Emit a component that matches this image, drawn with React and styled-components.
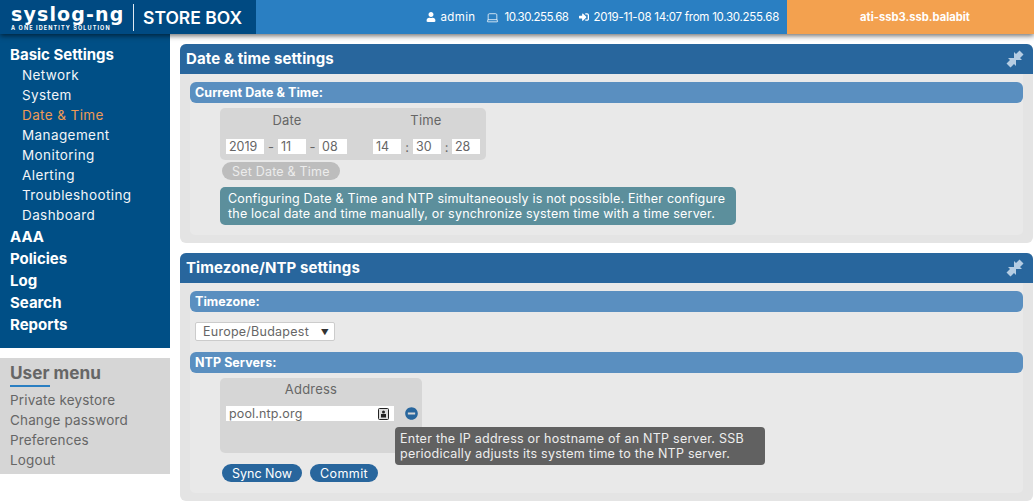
import React from 'react'
import styled, { createGlobalStyle } from 'styled-components'
import { FaUser, FaSignInAlt, FaMinusCircle } from 'react-icons/fa'
import { Laptop } from 'lucide-react'

const Global = createGlobalStyle`
    html, body { margin: 0; padding: 0; background: #fff; }
    body { font-family: Inter, "Open Sans", sans-serif; font-size: 13px; color: #666; overflow: hidden; }
    * { box-sizing: border-box; }
`

const Page = styled.div`
    width: 1034px;
    height: 501px;
    overflow: hidden;
    display: flex;
    flex-direction: column;
`

const Header = styled.header`
    height: 34px;
    flex: none;
    display: flex;
    background: #2a7fc2;
    color: #fff;
    box-shadow: 0 2px 5px rgba(0, 0, 0, 0.55);
    position: relative;
    z-index: 2;
`

const Brand = styled.div`
    width: 256px;
    background: #004a82;
    display: flex;
    align-items: center;
    padding-left: 11px;
`

const LogoText = styled.div`
    width: 115px;
    display: flex;
    flex-direction: column;
    align-items: flex-start;
    padding-top: 2px;
`

const LogoName = styled.div`
    font-family: "DejaVu Sans", sans-serif;
    font-size: 19px;
    font-weight: 700;
    line-height: 20px;
    letter-spacing: 1.15px;
    white-space: nowrap;
`

const LogoTag = styled.div`
    font-size: 5.5px;
    font-weight: 700;
    line-height: 8px;
    letter-spacing: 1.1px;
    white-space: nowrap;
`

const Divider = styled.div`
    width: 1px;
    height: 27px;
    background: #dfe9f2;
    margin: 0 9px 0 7px;
`

const Product = styled.div`
    font-size: 17.5px;
    font-weight: 600;
    white-space: nowrap;
`

const Status = styled.div`
    flex: 1;
    display: flex;
    justify-content: flex-end;
    align-items: center;
    gap: 11px;
    padding-right: 8px;
    font-size: 11.5px;
`

const StatusItem = styled.span`
    display: inline-flex;
    align-items: center;
    gap: ${p => p.$gap}px;
    white-space: nowrap;
    letter-spacing: ${p => p.$spacing}px;
    svg { font-size: 10px; flex: none; }
`

const Host = styled.div`
    width: 247px;
    background: #f3a14f;
    display: flex;
    align-items: center;
    justify-content: center;
    font-size: 11.2px;
    font-weight: 700;
    padding-left: 9px;
`

const Content = styled.div`
    flex: 1;
    display: flex;
    min-height: 0;
`

const Sidebar = styled.aside`
    width: 170px;
    flex: none;
    display: flex;
    flex-direction: column;
    gap: 10px;
`

const NavBox = styled.nav`
    height: 314px;
    background: #004f86;
    padding: 10px 0 0 10px;
    color: #fff;
`

const NavGroup = styled.div`
    font-size: 15px;
    font-weight: 700;
    line-height: 22px;
`

const NavList = styled.div`
    margin: -1px 0 1px;
`

const NavItem = styled.div`
    font-size: 13.5px;
    line-height: 20px;
    letter-spacing: 0.4px;
    padding-left: 12px;
    color: ${p => (p.$active ? '#ef9a55' : '#f2f5f8')};
`

const UserBox = styled.div`
    height: 116px;
    background: #d6d6d6;
    padding: 4px 10px 0;
`

const UserTitle = styled.div`
    display: inline-block;
    font-size: 17.2px;
    font-weight: 700;
    color: #666;
    line-height: 22px;
    position: relative;
    margin-bottom: 6px;
    &::after {
        content: '';
        position: absolute;
        left: 0;
        bottom: -3px;
        width: 40px;
        height: 2px;
        background: #2a7fc2;
    }
`

const UserLink = styled.div`
    font-size: 13.5px;
    line-height: 20px;
    letter-spacing: 0.15px;
    color: #666;
`

const Main = styled.main`
    flex: 1;
    min-width: 0;
    padding: 10px 1px 0 10px;
    display: flex;
    flex-direction: column;
    gap: 10px;
`

const Panel = styled.section`
    background: #e4e4e4;
    border-radius: 6px;
    height: ${p => p.$height}px;
    flex: none;
    padding-bottom: 8px;
    display: flex;
    flex-direction: column;
`

const PanelHead = styled.div`
    height: 30px;
    flex: none;
    background: #28669d;
    border-radius: 6px 6px 0 0;
    color: #fff;
    font-size: 15px;
    font-weight: 700;
    letter-spacing: 0.1px;
    display: flex;
    align-items: center;
    justify-content: space-between;
    padding: 0 8px 2px 6px;
`

const PinIcon = styled.svg`
    width: 20px;
    height: 20px;
    margin-top: 2px;
    flex: none;
`

const PanelBody = styled.div`
    flex: 1;
    margin: 0 10px;
    padding-top: 8px;
    background: #e9e9e9;
    border-radius: 0 0 5px 5px;
`

const SectionBar = styled.div`
    height: 21px;
    background: #5a8fc0;
    border-radius: 6px;
    color: #fff;
    font-size: 12.5px;
    font-weight: 700;
    letter-spacing: 0.05px;
    display: flex;
    align-items: center;
    padding-left: 5px;
`

const Card = styled.div`
    margin: 5px 0 0 30px;
    width: ${p => p.$width}px;
    height: ${p => p.$height}px;
    background: #d6d6d6;
    border-radius: 5px;
    padding: 0 6px;
    display: flex;
    flex-direction: column;
`

const LabelRow = styled.div`
    height: ${p => p.$height}px;
    flex: none;
    display: flex;
    align-items: center;
    font-size: 13px;
    letter-spacing: 0.2px;
    color: #666;
`

const Label = styled.span`
    width: ${p => p.$width}px;
    margin-left: ${p => p.$offset || 0}px;
    text-align: center;
`

const FieldRow = styled.div`
    margin-top: 7px;
    height: 15px;
    display: flex;
    align-items: center;
    color: #666;
    font-size: 13px;
`

const Field = styled.span`
    width: ${p => p.$width}px;
    height: 15px;
    background: #fff;
    padding-left: 3px;
    line-height: 15px;
    font-size: 12.5px;
    color: #666;
    flex: none;
`

const Sep = styled.span`
    width: ${p => p.$width}px;
    text-align: center;
    flex: none;
`

const Pill = styled.div`
    display: inline-flex;
    align-items: center;
    height: 18px;
    padding: 0 10px;
    border-radius: 9px;
    font-size: 12.5px;
    letter-spacing: ${p => p.$spacing || 0}px;
    background: ${p => (p.$disabled ? '#bdbdbd' : '#28669d')};
    color: ${p => (p.$disabled ? '#ececec' : '#fff')};
`

const Buttons = styled.div`
    display: flex;
    gap: 8px;
    margin: ${p => p.$top}px 0 0 32px;
`

const Notice = styled.div`
    margin: 7px 0 0 30px;
    width: 516px;
    height: 38px;
    padding: 4px 8px;
    background: #5c8f9c;
    border-radius: 5px;
    color: #fff;
    font-size: 12.5px;
    letter-spacing: 0.2px;
    line-height: 15px;
    white-space: nowrap;
`

const SelectBox = styled.div`
    margin: 10px 0 11px 5px;
    width: 140px;
    height: 19px;
    background: #fff;
    border: 1px solid #ccc;
    border-radius: 2px;
    display: flex;
    align-items: center;
    justify-content: space-between;
    padding: 0 5px 0 7px;
    font-size: 12.5px;
    letter-spacing: 0.25px;
    color: #666;
    &::after { content: '▼'; font-size: 8px; color: #333; }
`

const AddressRow = styled.div`
    position: relative;
    display: flex;
    align-items: center;
    margin-top: 6px;
`

const AddressField = styled.div`
    width: 168px;
    height: 15px;
    background: #fff;
    padding: 0 5px 0 3px;
    font-size: 12.5px;
    letter-spacing: 0.15px;
    line-height: 15px;
    color: #666;
    display: flex;
    align-items: center;
    justify-content: space-between;
`

const KeyIcon = styled.svg`
    width: 11px;
    height: 12px;
    flex: none;
`

const RemoveIcon = styled(FaMinusCircle)`
    position: absolute;
    left: 179px;
    font-size: 13px;
    color: #28669d;
`

const Tooltip = styled.div`
    position: absolute;
    left: 169px;
    top: 21px;
    width: 370px;
    height: 38px;
    padding: 4px 5px;
    background: #616161;
    border-radius: 4px;
    color: #eee;
    font-size: 12.5px;
    letter-spacing: 0.25px;
    line-height: 15px;
    white-space: nowrap;
    z-index: 1;
`

const navItems = ['Network', 'System', 'Date & Time', 'Management', 'Monitoring', 'Alerting', 'Troubleshooting', 'Dashboard']
const navGroups = ['AAA', 'Policies', 'Log', 'Search', 'Reports']
const userLinks = ['Private keystore', 'Change password', 'Preferences', 'Logout']

const Pin = () => (
    <PinIcon viewBox="0 0 20 20">
        <path fill="#b5cde3" d="M14.5 1.5 L18.5 5.5 L15 9 L17 11 L9 11 L9 3 L11 5 Z" />
        <path fill="#b5cde3" d="M5.5 18.5 L1.5 14.5 L5 11 L3 9 L11 9 L11 17 L9 15 Z" />
    </PinIcon>
)

const App = () => (
    <Page>
        <Global />
        <Header>
            <Brand>
                <LogoText>
                    <LogoName>syslog-ng</LogoName>
                    <LogoTag>A ONE IDENTITY SOLUTION</LogoTag>
                </LogoText>
                <Divider />
                <Product>STORE BOX</Product>
            </Brand>
            <Status>
                <StatusItem $gap={5} $spacing={0.35}><FaUser />admin</StatusItem>
                <StatusItem $gap={5} $spacing={-0.5}><Laptop size={13} strokeWidth={1.4} />10.30.255.68</StatusItem>
                <StatusItem $gap={4} $spacing={-0.26}><FaSignInAlt />2019-11-08 14:07 from 10.30.255.68</StatusItem>
            </Status>
            <Host>ati-ssb3.ssb.balabit</Host>
        </Header>
        <Content>
            <Sidebar>
                <NavBox>
                    <NavGroup>Basic Settings</NavGroup>
                    <NavList>
                        {navItems.map(item => (
                            <NavItem key={item} $active={item === 'Date & Time'}>{item}</NavItem>
                        ))}
                    </NavList>
                    {navGroups.map(group => <NavGroup key={group}>{group}</NavGroup>)}
                </NavBox>
                <UserBox>
                    <UserTitle>User menu</UserTitle>
                    {userLinks.map(link => <UserLink key={link}>{link}</UserLink>)}
                </UserBox>
            </Sidebar>
            <Main>
                <Panel $height={199}>
                    <PanelHead>Date &amp; time settings<Pin /></PanelHead>
                    <PanelBody>
                        <SectionBar>Current Date &amp; Time:</SectionBar>
                        <Card $width={266} $height={52}>
                            <LabelRow $height={24}>
                                <Label $width={122}>Date</Label>
                                <Label $width={106} $offset={25}>Time</Label>
                            </LabelRow>
                            <FieldRow>
                                <Field $width={38}>2019</Field>
                                <Sep $width={14}>-</Sep>
                                <Field $width={28}>11</Field>
                                <Sep $width={13}>-</Sep>
                                <Field $width={28}>08</Field>
                                <Sep $width={26} />
                                <Field $width={28}>14</Field>
                                <Sep $width={12}>:</Sep>
                                <Field $width={28}>30</Field>
                                <Sep $width={11}>:</Sep>
                                <Field $width={28}>28</Field>
                            </FieldRow>
                        </Card>
                        <Buttons $top={2}><Pill $disabled $spacing={0.2}>Set Date &amp; Time</Pill></Buttons>
                        <Notice>
                            Configuring Date &amp; Time and NTP simultaneously is not possible. Either configure<br />
                            the local date and time manually, or synchronize system time with a time server.
                        </Notice>
                    </PanelBody>
                </Panel>
                <Panel $height={248}>
                    <PanelHead>Timezone/NTP settings<Pin /></PanelHead>
                    <PanelBody>
                        <SectionBar>Timezone:</SectionBar>
                        <SelectBox>Europe/Budapest</SelectBox>
                        <SectionBar>NTP Servers:</SectionBar>
                        <Card $width={202} $height={75}>
                            <LabelRow $height={22}><Label $width={170}>Address</Label></LabelRow>
                            <AddressRow>
                                <AddressField>
                                    pool.ntp.org
                                    <KeyIcon viewBox="0 0 11 12">
                                        <rect x="0.5" y="0.5" width="10" height="11" rx="1" fill="#ddd" stroke="#222" />
                                        <circle cx="5.5" cy="4" r="1.5" fill="#222" />
                                        <rect x="3" y="6" width="5" height="3.5" fill="#222" />
                                    </KeyIcon>
                                </AddressField>
                                <RemoveIcon />
                                <Tooltip>
                                    Enter the IP address or hostname of an NTP server. SSB<br />
                                    periodically adjusts its system time to the NTP server.
                                </Tooltip>
                            </AddressRow>
                        </Card>
                        <Buttons $top={11}>
                            <Pill>Sync Now</Pill>
                            <Pill $spacing={0.4}>Commit</Pill>
                        </Buttons>
                    </PanelBody>
                </Panel>
            </Main>
        </Content>
    </Page>
)

export default App
